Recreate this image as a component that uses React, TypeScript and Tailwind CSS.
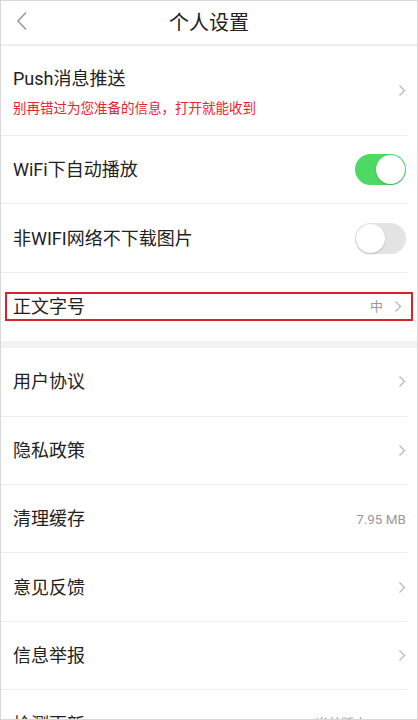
import React from 'react';

const font = { fontFamily: 'Roboto, "Noto Sans CJK SC", sans-serif' };

const Chevron = () => (
  <svg width="8" height="13" viewBox="0 0 8 13" className="shrink-0">
    <path d="M1.5 1.5 L6.5 6.5 L1.5 11.5" fill="none" stroke="#b8b8b8" strokeWidth="1.3" />
  </svg>
);

const Toggle = ({ on }: { on: boolean }) =>
  on ? (
    <div className="w-[51px] h-[31px] rounded-full bg-[#4cd964] relative">
      <div className="absolute right-[1px] top-[1px] w-[29px] h-[29px] rounded-full bg-white shadow-[0_1px_2px_rgba(0,0,0,0.2)]" />
    </div>
  ) : (
    <div className="w-[51px] h-[31px] rounded-full bg-[#e3e3e3] relative">
      <div className="absolute left-[1px] top-[1px] w-[29px] h-[29px] rounded-full bg-white shadow-[0_1px_2px_rgba(0,0,0,0.2)]" />
    </div>
  );

const Row = ({ label, right }: { label: string; right?: React.ReactNode }) => (
  <div className="h-[68.4px] flex flex-col">
    <div className="flex-1 flex items-center justify-between pl-[12px] pr-[11px]">
      <span className="text-[18px] text-[#222]">{label}</span>
      {right}
    </div>
    <div className="h-px bg-[#ececec] mr-[10px]" />
  </div>
);

export default function App() {
  return (
    <div style={font} className="w-[418px] h-[720px] overflow-hidden bg-white border border-[#d8d8d8]">
      {/* header */}
      <div className="h-[45px] relative flex items-center justify-center border-b-2 border-[#efefef]">
        <svg width="12" height="20" viewBox="0 0 12 20" className="absolute left-[15px] top-[10px]">
          <path d="M10 1.5 L2 10 L10 18.5" fill="none" stroke="#9a9a9a" strokeWidth="1.6" />
        </svg>
        <span className="text-[20px] text-[#222]">个人设置</span>
      </div>

      {/* push */}
      <div className="h-[90px] flex flex-col">
        <div className="flex-1 flex items-center justify-between pl-[12px] pr-[11px]">
          <div className="flex flex-col pt-[4px]">
            <span className="text-[18px] text-[#222] leading-[22px]">Push消息推送</span>
            <span className="text-[13.5px] text-[#e8232e] mt-[9px] leading-[18px]">别再错过为您准备的信息，打开就能收到</span>
          </div>
          <Chevron />
        </div>
        <div className="h-px bg-[#ececec] mr-[10px]" />
      </div>

      <Row label="WiFi下自动播放" right={<Toggle on />} />
      <Row label="非WIFI网络不下载图片" right={<Toggle on={false} />} />
      <div className="h-[68.4px] flex items-center">
        <div className="flex-1 mx-[4px] h-[29px] border-2 border-[#d9222b] flex items-center justify-between pl-[6px] pr-[9px]">
          <span className="text-[18px] text-[#222]">正文字号</span>
          <div className="flex items-center gap-[11px]">
            <span className="text-[13px] text-[#999]">中</span>
            <Chevron />
          </div>
        </div>
      </div>
      <div className="h-[7px] bg-[#f2f2f2]" />

      <Row label="用户协议" right={<Chevron />} />
      <Row label="隐私政策" right={<Chevron />} />
      <Row label="清理缓存" right={<span className="text-[13.5px] text-[#999]">7.95 MB</span>} />
      <Row label="意见反馈" right={<Chevron />} />
      <Row label="信息举报" right={<Chevron />} />
      <div className="h-[68px] flex items-center justify-between pl-[12px] pr-[50px]">
        <span className="text-[18px] text-[#222]">检测更新</span>
        <span className="text-[13px] text-[#999]">当前版本</span>
      </div>
    </div>
  );
}
